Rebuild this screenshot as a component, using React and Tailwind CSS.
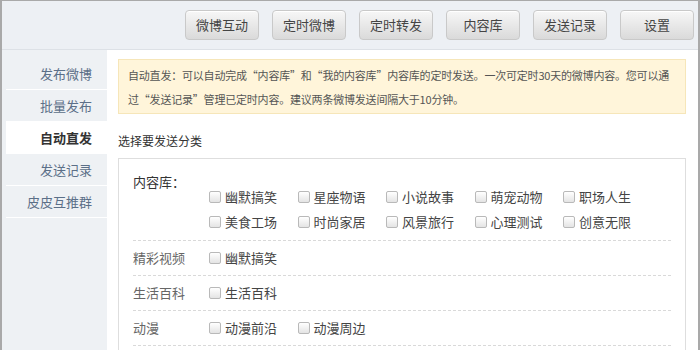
import React from 'react'

const topButtons = ['微博互动', '定时微博', '定时转发', '内容库', '发送记录', '设置']

const navItems = [
    { label: '发布微博' },
    { label: '批量发布' },
    { label: '自动直发', active: true },
    { label: '发送记录' },
    { label: '皮皮互推群' },
]

const library = ['幽默搞笑', '星座物语', '小说故事', '萌宠动物', '职场人生', '美食工场', '时尚家居', '风景旅行', '心理测试', '创意无限']

const groups = [
    { label: '精彩视频', items: ['幽默搞笑'] },
    { label: '生活百科', items: ['生活百科'] },
    { label: '动漫', items: ['动漫前沿', '动漫周边'] },
]

const CheckItem = ({ text }) => (
    <label className="w-[88.5px] flex items-center shrink-0">
        <span className="w-[12px] h-[12px] mr-[4px] rounded-[2px] border border-[#b9b9b9] bg-gradient-to-b from-white to-[#e4e4e4]"></span>
        <span className="text-[13px] text-[#444]">{text}</span>
    </label>
)

const App = () => {
    return (
        <div
            className="w-[700px] h-[350px] overflow-hidden bg-white border-t border-l-2 border-r-2 border-[#a9a9a9] flex flex-col"
            style={{ fontFamily: '"Noto Sans CJK SC", "Noto Sans", sans-serif' }}
        >
            {/* Top bar */}
            <div className="h-[49px] shrink-0 bg-[#edf0f4] border-b border-[#dde1e6] flex items-center justify-end gap-[13px] pr-[4px]">
                {topButtons.map((b) => (
                    <button
                        key={b}
                        className="w-[74px] h-[30px] rounded-[4px] border border-[#c9c9c9] bg-gradient-to-b from-[#f7f7f7] to-[#dadada] text-[13px] text-[#444] shadow-[inset_0_1px_0_#fff]"
                    >
                        {b}
                    </button>
                ))}
            </div>

            <div className="flex flex-1 min-h-0">
                {/* Side nav */}
                <div className="w-[105px] shrink-0 bg-[#eef1f4] pt-[8px]">
                    {navItems.map((n) => (
                        <div
                            key={n.label}
                            className={`ml-[4px] h-[32px] border-b border-white flex items-center justify-end pr-[15px] text-[13px] ${n.active ? 'bg-white font-bold text-[#333]' : 'text-[#5b6f88]'}`}
                        >
                            {n.label}
                        </div>
                    ))}
                </div>

                {/* Main */}
                <div className="flex-1 min-w-0 pl-[11px] pr-[12px] pt-[9px]">
                    <div className="h-[55px] bg-[#fff5da] border border-[#f6e6b9] pl-[9px] pr-[4px] pt-[3px] text-[11px] leading-[24px] tracking-[-0.2px] text-[#555]">
                        自动直发：可以自动完成“内容库”和“我的内容库”内容库的定时发送。一次可定时30天的微博内容。您可以通过“发送记录”管理已定时内容。建议两条微博发送间隔大于10分钟。
                    </div>

                    <p className="mt-[18px] text-[12px] leading-[18px] text-[#333]">选择要发送分类</p>

                    <div className="mt-[8px] border border-[#dedede] px-[14px] pt-[14px] h-[200px]">
                        <div className="border-b border-dashed border-[#d9d9d9] pb-[6px]">
                            <div className="text-[13px] leading-[18px] text-[#333]">内容库：</div>
                            <div className="-mt-[7px] pl-[76px] flex flex-wrap">
                                {library.map((t) => (
                                    <div key={t} className="h-[25px] flex items-center">
                                        <CheckItem text={t} />
                                    </div>
                                ))}
                            </div>
                        </div>

                        {groups.map((g) => (
                            <div key={g.label} className="h-[35px] border-b border-dashed border-[#d9d9d9] flex items-center">
                                <div className="w-[76px] text-[13px] text-[#666]">{g.label}</div>
                                {g.items.map((t) => (
                                    <CheckItem key={t} text={t} />
                                ))}
                            </div>
                        ))}
                    </div>
                </div>
            </div>
        </div>
    )
}

export default App
